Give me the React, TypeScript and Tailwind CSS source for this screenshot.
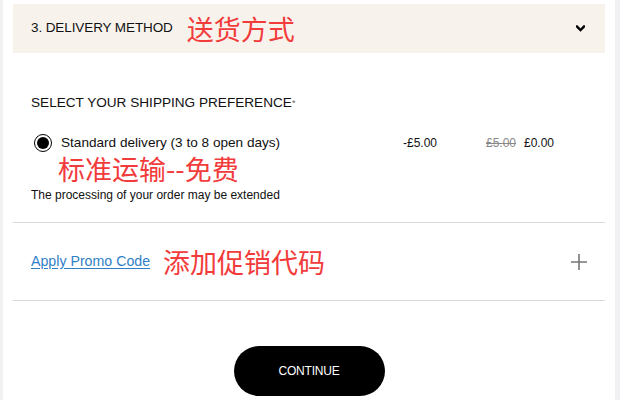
import React from 'react';

const RED = 'text-[#f23b3b]';
const CJK = { fontFamily: '"Noto Sans CJK SC", "Liberation Sans", sans-serif' };

export default function App() {
  return (
    <div className="min-h-screen w-full bg-[#f1f1f3]" style={{ fontFamily: '"Liberation Sans", Arial, sans-serif' }}>
      <div className="ml-[3px] w-[612px] min-h-[400px] bg-white px-[10px] pt-[4px]">
        {/* Header */}
        <div className="h-[49px] bg-[#f7f3ec] flex items-center pl-[18px] pr-[18px]">
          <span className="text-[13.5px] text-[#111] tracking-[-0.1px]">3. DELIVERY METHOD</span>
          <span className={`ml-[14px] text-[27px] leading-none ${RED}`} style={CJK}>送货方式</span>
          <svg className="ml-auto mr-[2px]" width="9" height="7" viewBox="0 0 9 7">
            <path d="M1 1.5 L4.5 5 L8 1.5" stroke="#000" strokeWidth="2.4" fill="none" strokeLinecap="square" />
          </svg>
        </div>

        {/* Shipping preference */}
        <div className="px-[18px]">
          <div className="pt-[42px] text-[13.6px] text-[#111] leading-[16px]">
            SELECT YOUR SHIPPING PREFERENCE<span className="text-[#666] text-[9px] align-top">*</span>
          </div>
          <div className="mt-[22px] flex items-center h-[20px]">
            <span className="ml-[3px] w-[18px] h-[18px] rounded-full border-[1.5px] border-black flex items-center justify-center">
              <span className="w-[12px] h-[12px] rounded-full bg-black" />
            </span>
            <span className="ml-[9px] text-[13.6px] text-[#111]">Standard delivery (3 to 8 open days)</span>
            <span className="ml-auto w-[83px] text-[12px] text-[#111]">-£5.00</span>
            <span className="text-[12px] text-[#888] line-through">£5.00</span>
            <span className="ml-[8px] w-[63px] text-[12px] text-[#111]">£0.00</span>
          </div>
          <div className={`ml-[27px] h-[30px] flex items-center text-[27px] leading-none ${RED}`} style={CJK}>
            标准运输--免费
          </div>
          <div className="mt-[5px] text-[12px] text-[#111] leading-[14px]">The processing of your order may be extended</div>
        </div>

        <div className="mt-[20px] h-px bg-[#d9d9d9]" />

        {/* Promo */}
        <div className="h-[77px] px-[18px] flex items-center">
          <a className="text-[14.2px] text-[#2f7fc6] underline underline-offset-2">Apply Promo Code</a>
          <span className={`ml-[13px] text-[27px] leading-none ${RED}`} style={CJK}>添加促销代码</span>
          <svg className="ml-auto" width="16" height="16" viewBox="0 0 16 16">
            <path d="M8 0 V16 M0 8 H16" stroke="#777" strokeWidth="1.6" />
          </svg>
        </div>

        <div className="h-px bg-[#d9d9d9]" />

        {/* Continue */}
        <div className="pt-[45px] flex justify-center">
          <button className="w-[151px] h-[50px] rounded-full bg-black text-white text-[12px] tracking-[-0.2px]">CONTINUE</button>
        </div>
      </div>
    </div>
  );
}
